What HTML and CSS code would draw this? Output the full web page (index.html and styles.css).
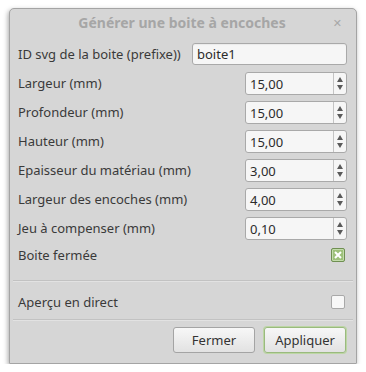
FILE: index.html
```html
<!DOCTYPE html>
<html lang="fr">
<head>
  <meta charset="UTF-8">
  <title>Générer une boite à encoches</title>
  <link rel="stylesheet" href="styles.css">
</head>
<body>
  <div class="dialog">
    <div class="titlebar">
      <span class="title">Générer une boite à encoches</span>
      <span class="close">&#x2715;</span>
    </div>

    <div class="form">
      <div class="row">
        <span class="label">ID svg de la boite (prefixe))</span>
        <input class="text" type="text" value="boite1">
      </div>
      <div class="row">
        <span class="label">Largeur (mm)</span>
        <div class="spin"><span class="val">15,00</span><span class="arrows"><i class="up"></i><i class="down"></i></span></div>
      </div>
      <div class="row">
        <span class="label">Profondeur (mm)</span>
        <div class="spin"><span class="val">15,00</span><span class="arrows"><i class="up"></i><i class="down"></i></span></div>
      </div>
      <div class="row">
        <span class="label">Hauteur (mm)</span>
        <div class="spin"><span class="val">15,00</span><span class="arrows"><i class="up"></i><i class="down"></i></span></div>
      </div>
      <div class="row">
        <span class="label">Epaisseur du matériau (mm)</span>
        <div class="spin"><span class="val">3,00</span><span class="arrows"><i class="up"></i><i class="down"></i></span></div>
      </div>
      <div class="row">
        <span class="label">Largeur des encoches (mm)</span>
        <div class="spin"><span class="val">4,00</span><span class="arrows"><i class="up"></i><i class="down"></i></span></div>
      </div>
      <div class="row">
        <span class="label">Jeu à compenser (mm)</span>
        <div class="spin"><span class="val">0,10</span><span class="arrows"><i class="up"></i><i class="down"></i></span></div>
      </div>
      <div class="row row-check">
        <span class="label">Boite fermée</span>
        <span class="check checked">
          <svg width="8" height="8" viewBox="0 0 8 8"><path d="M1 1L7 7M7 1L1 7" stroke="#fff" stroke-width="2"/></svg>
        </span>
      </div>
    </div>

    <div class="sep"></div>

    <div class="row row-live">
      <span class="label">Aperçu en direct</span>
      <span class="check"></span>
    </div>

    <div class="sep sep-tight"></div>

    <div class="buttons">
      <button class="btn">Fermer</button>
      <button class="btn default">Appliquer</button>
    </div>
  </div>
</body>
</html>
```

FILE: styles.css
```css
body {
  margin: 0;
  background: #ffffff;
  font-family: "Noto Sans", "DejaVu Sans", sans-serif;
  font-size: 13px;
  color: #3a3a3a;
}

.dialog {
  margin: 8px 0 0 9px;
  width: 346px;
  height: 354px;
  background: #d6d6d6;
  border: 1px solid #a4a4a4;
  border-radius: 5px 5px 1px 1px;
  box-shadow: -1px 2px 5px rgba(0, 0, 0, 0.35);
  display: flex;
  flex-direction: column;
}

.titlebar {
  height: 26px;
  padding-bottom: 4px;
  display: flex;
  align-items: center;
  justify-content: center;
  position: relative;
}

.title {
  font-weight: bold;
  font-size: 14px;
  color: #a6a6a6;
  margin-left: -2px;
}

.close {
  position: absolute;
  right: 14px;
  top: 6px;
  font-size: 11px;
  font-weight: bold;
  color: #a8a8a8;
}

.form {
  padding: 0 9px 0 8px;
}

.row {
  height: 29px;
  display: flex;
  align-items: center;
  justify-content: space-between;
}

.label {
  color: #3a3a3a;
  white-space: nowrap;
}

.text {
  width: 155px;
  height: 22px;
  box-sizing: border-box;
  margin-left: 4px;
  padding: 0 4px;
  border: 1px solid #a9a9a9;
  border-radius: 3px;
  background: #f6f6f6;
  font-family: inherit;
  font-size: 13px;
  color: #2b2b2b;
  box-shadow: inset 0 1px 1px rgba(0, 0, 0, 0.05);
}

.spin {
  width: 102px;
  height: 23px;
  box-sizing: border-box;
  border: 1px solid #a9a9a9;
  border-radius: 3px;
  background: #f6f6f6;
  display: flex;
  align-items: center;
  margin-top: 2px;
}

.val {
  flex: 1;
  padding-left: 4px;
  color: #2b2b2b;
}

.arrows {
  width: 12px;
  height: 100%;
  border-left: 1px solid #c4c4c4;
  display: flex;
  flex-direction: column;
  align-items: center;
  justify-content: center;
  gap: 3px;
}

.arrows i {
  width: 0;
  height: 0;
  border-left: 3px solid transparent;
  border-right: 3px solid transparent;
}

.arrows .up {
  border-bottom: 5px solid #5a5a5a;
}

.arrows .down {
  border-top: 5px solid #5a5a5a;
}

.row-check {
  height: 28px;
  margin-top: -1px;
}

.check {
  width: 12px;
  height: 12px;
  border: 1px solid #a9a9a9;
  border-radius: 2px;
  background: #f8f8f8;
  display: flex;
  align-items: center;
  justify-content: center;
  margin-right: 2px;
}

.check.checked {
  background: #9dc07a;
  border-color: #6f8f52;
  box-shadow: inset 0 0 0 1px #c3dcab;
}

.sep {
  height: 1px;
  background: #c2c2c2;
  border-bottom: 1px solid #e2e2e2;
  margin: 11px 3px 0 3px;
}

.sep-tight {
  margin-top: 0;
}

.row-live {
  height: 35px;
  padding: 2px 9px 0 8px;
}

.buttons {
  display: flex;
  justify-content: flex-end;
  gap: 9px;
  padding: 6px 10px 0 0;
}

.btn {
  width: 82px;
  height: 26px;
  border: 1px solid #a4a4a4;
  border-radius: 3px;
  background: linear-gradient(#f7f7f7, #e2e2e2);
  font-family: inherit;
  font-size: 13px;
  color: #333;
  padding: 0;
}

.btn.default {
  border-color: #9aba7e;
  box-shadow: 0 0 0 1px #bcd6a4;
}
```
